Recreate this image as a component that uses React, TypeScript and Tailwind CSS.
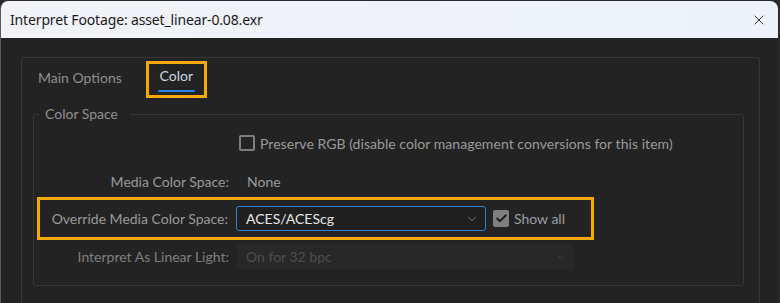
import React from "react";
import { ChevronDown, Check, X } from "lucide-react";

const font = { fontFamily: "Lato, 'Noto Sans', sans-serif" };

export default function App() {
  return (
    <div className="w-[780px] h-[303px] bg-[#2a2a2a] pt-[1px] overflow-hidden" style={font}>
      <div className="w-[778px] h-[302px] flex flex-col rounded-t-[8px] overflow-hidden border-l border-[#5a5a5a]">
        {/* Title bar */}
        <div className="h-[37px] shrink-0 flex items-center justify-between bg-gradient-to-r from-[#f1f3f8] to-[#edf2fa] pl-[9px] pr-[11px]">
          <span className="text-[14px] text-[#1a1a1a] font-['Noto_Sans'] tracking-[-0.15px]">
            Interpret Footage: asset_linear-0.08.exr
          </span>
          <X className="w-[16px] h-[16px] text-[#1a1a1a]" strokeWidth={1.3} />
        </div>

        {/* Body */}
        <div className="flex-1 bg-[#232323] pl-[20px] pr-[18px] pt-[19px]">
          <div className="h-full border-t border-l border-r border-[#363636] rounded-t-[3px] pl-[11px] pr-[15px]">
            {/* Tabs */}
            <div className="flex items-center h-[41px] pt-[2px]">
              <span className="ml-[5px] text-[14px] text-[#8f8f8f] pb-[5px]">Main Options</span>
              <div className="ml-[24px] border-[3px] border-[#f7a900] h-[37px] w-[61px] flex flex-col items-center justify-center">
                <span className="text-[14px] text-[#cdd6df] leading-[18px]">Color</span>
                <span className="mt-[5px] h-[2px] w-[37px] bg-[#2a84e8] rounded-full" />
              </div>
            </div>

            {/* Color Space group */}
            <fieldset className="mt-[6px] border border-[#373737] rounded-[3px] pb-[12px]">
              <legend className="ml-[6px] pl-[5px] pr-[12px] text-[14px] text-[#8f8f8f] leading-[18px]">
                Color Space
              </legend>

              {/* Preserve RGB */}
              <div className="flex items-center h-[39px] pt-[1px]">
                <div className="w-[195px]" />
                <div className="ml-[10px] flex items-center gap-[5px]">
                  <span className="w-[16px] h-[16px] border-2 border-[#7d7d7d] rounded-[2px]" />
                  <span className="text-[14px] text-[#9a9a9a] tracking-[0.05px]">
                    Preserve RGB (disable color management conversions for this item)
                  </span>
                </div>
              </div>

              {/* Media color space */}
              <div className="flex items-center h-[35px] pt-[3px]">
                <span className="w-[195px] text-right text-[14px] text-[#9a9a9a]">Media Color Space:</span>
                <span className="ml-[18px] text-[14px] text-[#9a9a9a]">None</span>
              </div>

              {/* Override - highlighted */}
              <div className="ml-[3px] w-[557px] h-[43px] border-[3px] border-[#f7a900] flex items-center">
                <span className="w-[188px] text-right text-[14px] text-[#9a9a9a]">Override Media Color Space:</span>
                <div className="ml-[8px] w-[250px] h-[25px] border border-[#2f7fd6] rounded-[3px] bg-[#1f1f1f] flex items-center justify-between pl-[9px] pr-[6px]">
                  <span className="text-[14px] text-[#e6e6e6]">ACES/ACEScg</span>
                  <ChevronDown className="w-[14px] h-[14px] text-[#9a9a9a]" strokeWidth={1.3} />
                </div>
                <div className="ml-[7px] flex items-center gap-[5px]">
                  <span className="w-[16px] h-[17px] bg-[#7f7f7f] rounded-[2px] flex items-center justify-center">
                    <Check className="w-[13px] h-[13px] text-[#1e1e1e]" strokeWidth={3.5} />
                  </span>
                  <span className="text-[14px] text-[#9a9fa6]">Show all</span>
                </div>
              </div>

              {/* Interpret as linear light */}
              <div className="flex items-center h-[33px]">
                <span className="w-[195px] text-right text-[14px] text-[#7f7f7f]">Interpret As Linear Light:</span>
                <div className="ml-[8px] w-[337px] h-[25px] rounded-[3px] bg-[#282828] flex items-center justify-between pl-[9px] pr-[6px]">
                  <span className="text-[14px] text-[#4e4e4e]">On for 32 bpc</span>
                  <ChevronDown className="w-[14px] h-[14px] text-[#4a4a4a]" strokeWidth={1.3} />
                </div>
              </div>
            </fieldset>
          </div>
        </div>
      </div>
    </div>
  );
}
